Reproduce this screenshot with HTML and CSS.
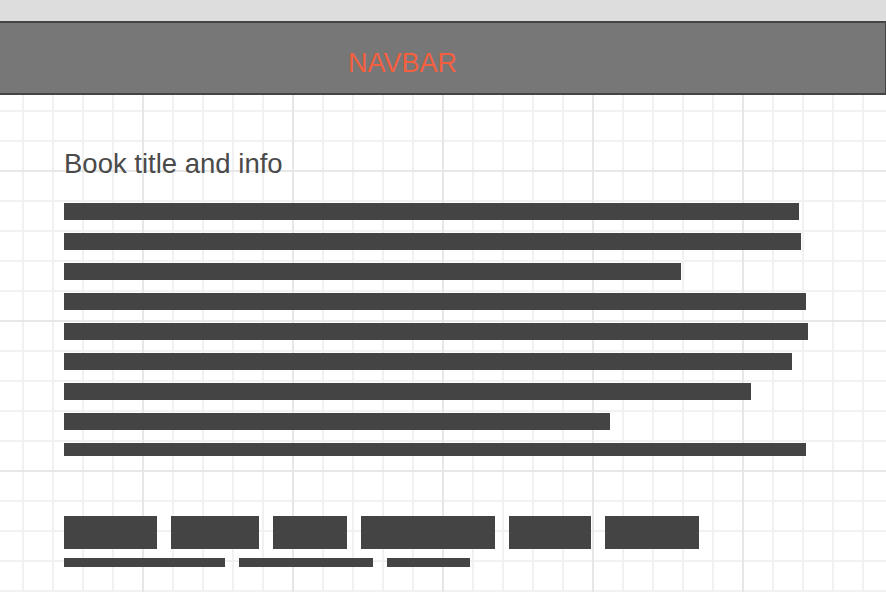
FILE: index.html
```html
<!DOCTYPE html>
<html>
<head>
<meta charset="utf-8">
<link rel="stylesheet" href="styles.css">
</head>
<body>
<div class="topstrip"></div>
<div class="canvas">
  <header class="navbar"><span class="navbar-label">NAVBAR</span></header>
  <main class="content">
    <h1 class="title">Book title and info</h1>
    <div class="lines">
      <div class="line" style="width:735px"></div>
      <div class="line" style="width:737px"></div>
      <div class="line" style="width:617px"></div>
      <div class="line" style="width:742px"></div>
      <div class="line" style="width:744px"></div>
      <div class="line" style="width:728px"></div>
      <div class="line" style="width:687px"></div>
      <div class="line" style="width:546px"></div>
      <div class="line line-last" style="width:742px"></div>
    </div>
    <div class="tabs">
      <div class="tab" style="width:93px"></div>
      <div class="tab" style="width:88px"></div>
      <div class="tab" style="width:74px"></div>
      <div class="tab" style="width:134px"></div>
      <div class="tab" style="width:82px"></div>
      <div class="tab" style="width:94px"></div>
    </div>
    <div class="subs">
      <div class="sub" style="width:161px"></div>
      <div class="sub" style="width:134px"></div>
      <div class="sub" style="width:83px"></div>
    </div>
  </main>
</div>
</body>
</html>
```
FILE: styles.css
```css
html, body {
  margin: 0;
  padding: 0;
  width: 886px;
  height: 592px;
  overflow: hidden;
  background: #fff;
  font-family: "Liberation Sans", Arial, sans-serif;
}
.topstrip {
  height: 21px;
  background: #dddddd;
}
.canvas {
  height: 571px;
  background-color: #fff;
  background-image:
    linear-gradient(to right, #e7e7e7 0, #e7e7e7 2px, transparent 2px),
    linear-gradient(to bottom, #e7e7e7 0, #e7e7e7 2px, transparent 2px),
    linear-gradient(to right, #f1f1f1 0, #f1f1f1 2px, transparent 2px),
    linear-gradient(to bottom, #f1f1f1 0, #f1f1f1 2px, transparent 2px);
  background-size: 150px 150px, 150px 150px, 30px 30px, 30px 30px;
  background-position: -8px -1px, -8px -1px, -8px -1px, -8px -1px;
}
.navbar {
  box-sizing: border-box;
  height: 74px;
  background: #777777;
  border-top: 2px solid #444;
  border-bottom: 2px solid #444;
  border-right: 1px solid #444;
  display: flex;
  align-items: flex-start;
  padding-left: 348px;
  padding-top: 25px;
}
.navbar-label {
  color: #f4603f;
  font-size: 27px;
  line-height: 30px;
}
.content {
  padding-left: 64px;
  display: flex;
  flex-direction: column;
  align-items: flex-start;
}
.title {
  margin: 54px 0 0 0;
  font-weight: normal;
  font-size: 27.5px;
  line-height: 30px;
  color: #4a4a4a;
}
.lines {
  margin-top: 24px;
  display: flex;
  flex-direction: column;
  gap: 13px;
}
.line {
  height: 17px;
  background: #444;
}
.line-last {
  height: 13px;
}
.tabs {
  margin-top: 60px;
  display: flex;
  gap: 14px;
}
.tab {
  height: 33px;
  background: #444;
}
.subs {
  margin-top: 9px;
  display: flex;
  gap: 14px;
}
.sub {
  height: 9px;
  background: #444;
}
```
